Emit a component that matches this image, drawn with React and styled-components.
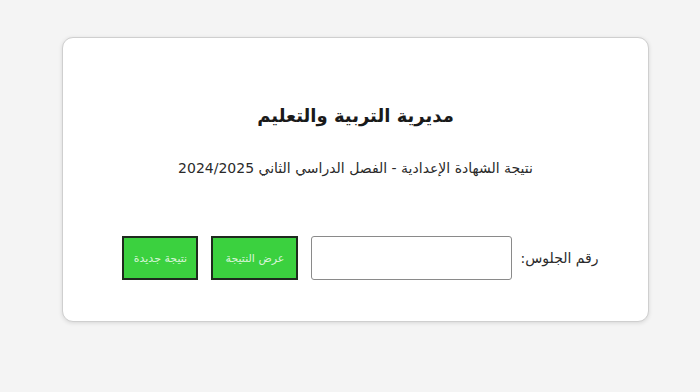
import React from "react";
import styled, { createGlobalStyle } from "styled-components";

const Global = createGlobalStyle`
  html, body { margin: 0; padding: 0; background: #f4f4f4; }
  body { font-family: "DejaVu Sans", "Noto Sans", sans-serif; }
`;

const Page = styled.div`
  width: 700px;
  height: 392px;
  box-sizing: border-box;
  padding: 37px 0 0 62px;
`;

const Card = styled.div`
  direction: rtl;
  width: 587px;
  height: 285px;
  box-sizing: border-box;
  background: #ffffff;
  border: 1px solid #cfcfcf;
  border-radius: 11px;
  box-shadow: 0 1px 4px rgba(0, 0, 0, 0.12);
  display: flex;
  flex-direction: column;
  align-items: center;
  padding-top: 62px;
`;

const Title = styled.h1`
  margin: 0;
  font-size: 18px;
  font-weight: bold;
  color: #1a1a1a;
  line-height: 32px;
`;

const Subtitle = styled.p`
  margin: 25px 0 0;
  font-size: 14px;
  color: #2a2a2a;
  line-height: 22px;
`;

const Row = styled.div`
  margin-top: 57px;
  display: flex;
  align-items: center;
  gap: 13px;
  padding-left: 10px;
`;

const Label = styled.label`
  font-size: 14px;
  color: #2a2a2a;
  margin-left: -5px;
`;

const Input = styled.input`
  width: 201px;
  height: 44px;
  box-sizing: border-box;
  border: 1px solid #8a8a8a;
  border-radius: 3px;
  background: #fff;
`;

const Button = styled.button`
  height: 44px;
  width: ${(p) => p.$w}px;
  box-sizing: border-box;
  background: #3bd13f;
  border: 2px solid #1e2a1e;
  color: #d8f5d8;
  font-family: "DejaVu Sans", "Noto Sans", sans-serif;
  font-size: 11px;
  padding: 0;
  cursor: pointer;
`;

export default function App() {
  return (
    <>
      <Global />
      <Page>
        <Card>
          <Title>مديرية التربية والتعليم</Title>
          <Subtitle>نتيجة الشهادة الإعدادية - الفصل الدراسي الثاني 2024/2025</Subtitle>
          <Row>
            <Label>رقم الجلوس:</Label>
            <Input type="text" />
            <Button $w={87}>عرض النتيجة</Button>
            <Button $w={76}>نتيجة جديدة</Button>
          </Row>
        </Card>
      </Page>
    </>
  );
}
